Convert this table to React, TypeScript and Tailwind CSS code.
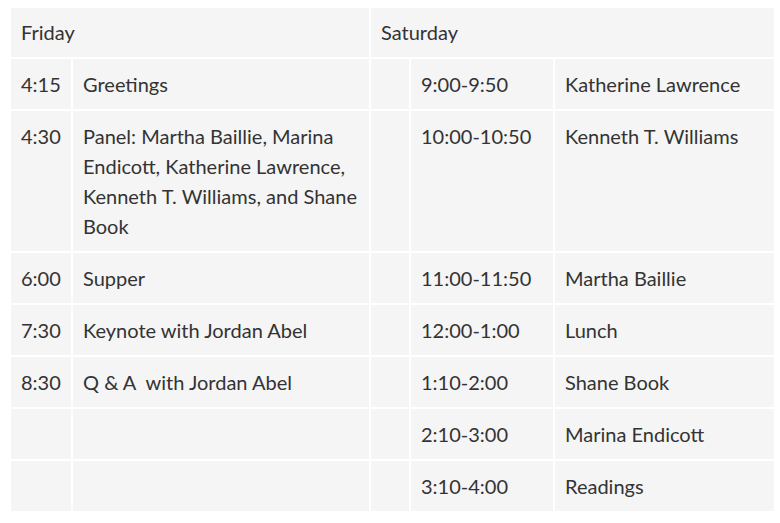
import React from "react";

const cell = "bg-[#f5f5f5] px-[10px] py-[10px] leading-[30px]";

const rows: [string, string, string, string][] = [
  ["4:15", "Greetings", "9:00-9:50", "Katherine Lawrence"],
  [
    "4:30",
    "Panel: Martha Baillie, Marina Endicott, Katherine Lawrence, Kenneth T. Williams, and Shane Book",
    "10:00-10:50",
    "Kenneth T. Williams",
  ],
  ["6:00", "Supper", "11:00-11:50", "Martha Baillie"],
  ["7:30", "Keynote with Jordan Abel", "12:00-1:00", "Lunch"],
  ["8:30", "Q & A\u00a0 with Jordan Abel", "1:10-2:00", "Shane Book"],
  ["", "", "2:10-3:00", "Marina Endicott"],
  ["", "", "3:10-4:00", "Readings"],
];

export default function App() {
  return (
    <div
      className="w-[780px] h-[523px] bg-white pt-[8px] pl-[11px] text-[20px] text-[#333333]"
      style={{ fontFamily: "Lato, 'Open Sans', sans-serif" }}
    >
      <div className="grid grid-cols-[60px_296px_38px_142px_219px] gap-[2px] w-[763px]">
        <div className="bg-[#f5f5f5] px-[10px] leading-[30px] col-span-2 h-[49px] pb-[2px] flex items-center">Friday</div>
        <div className="bg-[#f5f5f5] px-[10px] leading-[30px] col-span-3 h-[49px] pb-[2px] flex items-center">Saturday</div>
        {rows.map((r, i) => (
          <React.Fragment key={i}>
            <div className={cell}>{r[0]}</div>
            <div className={cell}>{r[1]}</div>
            <div className={cell}></div>
            <div className={cell}>{r[2]}</div>
            <div className={cell}>{r[3]}</div>
          </React.Fragment>
        ))}
      </div>
    </div>
  );
}
